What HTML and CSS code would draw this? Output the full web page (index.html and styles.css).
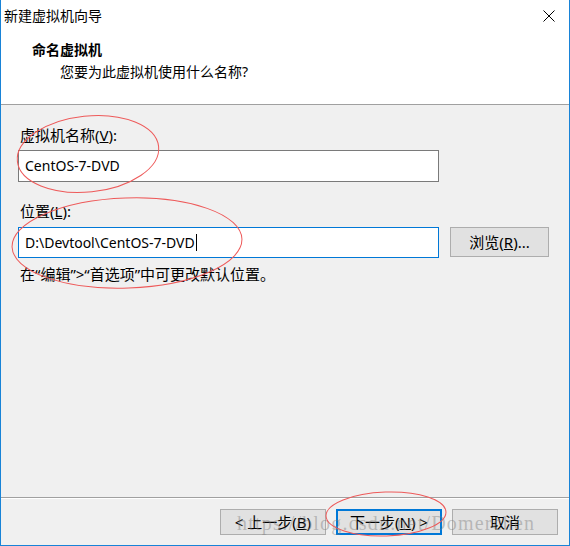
FILE: index.html
```html
<!DOCTYPE html>
<html lang="zh-CN">
<head>
    <meta charset="UTF-8">
    <meta name="viewport" content="width=device-width, initial-scale=1.0">
    <title>新建虚拟机向导</title>
    <link rel="stylesheet" href="styles.css">
</head>
<body>
    <div class="window">
        <div class="header">
            <div class="titlebar">
                <span class="title">新建虚拟机向导</span>
                <svg class="close" width="12" height="12" viewBox="0 0 12 12">
                    <path d="M0.5 0.5 L11.5 11.5 M11.5 0.5 L0.5 11.5" stroke="#000" stroke-width="1" fill="none"/>
                </svg>
            </div>
            <div class="heading">
                <div class="heading-title">命名虚拟机</div>
                <div class="heading-sub">您要为此虚拟机使用什么名称?</div>
            </div>
        </div>

        <div class="content">
            <div class="field-label">虚拟机名称(<u>V</u>):</div>
            <div class="input">CentOS-7-DVD</div>

            <div class="field-label second">位置(<u>L</u>):</div>
            <div class="row">
                <div class="input focused">D:\Devtool\CentOS-7-DVD<span class="caret"></span></div>
                <button class="btn browse">浏览(<u>R</u>)...</button>
            </div>

            <p class="hint">在“编辑”&gt;“首选项”中可更改默认位置。</p>
        </div>

        <div class="footer">
            <button class="btn">&lt; 上一步(<u>B</u>)</button>
            <button class="btn default">下一步(<u>N</u>) &gt;</button>
            <button class="btn">取消</button>
        </div>

        <!-- watermark + hand drawn marks lie over the dialog -->
        <div class="watermark">https://blog.csdn.net/Domerchen</div>
        <svg class="marks" width="570" height="546" viewBox="0 0 570 546">
            <ellipse cx="88" cy="154" rx="71" ry="38" transform="rotate(-6 88 154)"/>
            <ellipse cx="127" cy="243" rx="115" ry="45" transform="rotate(-2 127 243)"/>
            <ellipse cx="386" cy="514" rx="60" ry="22" transform="rotate(-2 386 514)"/>
        </svg>
    </div>
</body>
</html>
```

FILE: styles.css
```css
* {
    margin: 0;
    padding: 0;
    box-sizing: border-box;
}

body {
    font-family: "Noto Sans", "Noto Sans CJK SC", sans-serif;
    font-size: 14px;
    color: #000;
    background: #fff;
}

.window {
    position: relative;
    width: 570px;
    height: 546px;
    display: flex;
    flex-direction: column;
    border: 1px solid #1883d7;
    border-top: none;
    background: #f0f0f0;
    overflow: hidden;
}

/* Kopfbereich */
.header {
    height: 105px;
    background: #fff;
    border-bottom: 1px solid #a0a0a0;
}

.titlebar {
    height: 31px;
    display: flex;
    align-items: center;
    justify-content: space-between;
    padding: 0 14px 0 3px;
}

.title {
    line-height: 31px;
}

.close {
    display: block;
    margin-top: 1px;
}

.heading {
    padding: 9px 0 0 31px;
}

.heading-title {
    font-weight: 700;
    line-height: 20px;
}

.heading-sub {
    margin-top: 2px;
    padding-left: 28px;
    line-height: 20px;
}

/* Formular */
.content {
    flex: 1;
    padding: 20px 0 0 17px;
    font-size: 15px;
}

.field-label {
    line-height: 20px;
    padding-left: 2px;
    margin-bottom: 5px;
}

.field-label.second {
    margin-top: 19px;
    margin-bottom: 6px;
}

.input {
    width: 421px;
    height: 32px;
    border: 1px solid #7a7a7a;
    background: #fff;
    padding-left: 6px;
    font-size: 14px;
    line-height: 30px;
    display: flex;
    align-items: center;
}

.input.focused {
    height: 31px;
    border-color: #0078d7;
}

.caret {
    display: inline-block;
    width: 1px;
    height: 17px;
    background: #000;
    margin-left: 1px;
}

.row {
    display: flex;
    align-items: flex-start;
}

.hint {
    margin-top: 6px;
    padding-left: 2px;
    line-height: 20px;
}

/* Buttons */
.btn {
    font-family: inherit;
    font-size: 15px;
    color: #000;
    width: 106px;
    height: 26px;
    background: #e1e1e1;
    border: 1px solid #adadad;
    line-height: 22px;
}

.btn.browse {
    width: 99px;
    height: 30px;
    margin-left: 11px;
}

.btn.default {
    border: 2px solid #0078d7;
}

.footer {
    display: flex;
    justify-content: flex-end;
    gap: 10px;
    padding: 11px 11px 10px 0;
    border-top: 1px solid #a0a0a0;
    box-shadow: inset 0 1px 0 #fff;
}

.watermark {
    position: absolute;
    left: 236px;
    top: 513px;
    font-family: "Liberation Serif", serif;
    font-size: 20px;
    line-height: 20px;
    letter-spacing: 1.2px;
    color: rgba(120, 120, 120, 0.42);
    white-space: nowrap;
    pointer-events: none;
}

.marks {
    position: absolute;
    left: -1px;
    top: 0;
    pointer-events: none;
}

.marks ellipse {
    fill: none;
    stroke: #ee5a5a;
    stroke-width: 1;
}
```
